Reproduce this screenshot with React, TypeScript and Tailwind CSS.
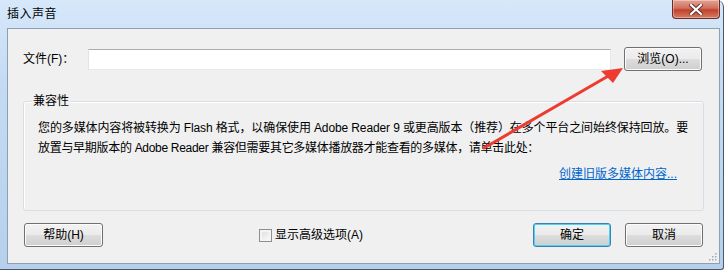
import { useState } from 'react';

const font = { fontFamily: '"Liberation Sans", "Noto Sans CJK SC", sans-serif' };

const Button = ({ label, focused, className = '' }: { label: string; focused?: boolean; className?: string }) => (
  <button
    className={`h-[24px] rounded-[3px] border text-[12px] text-black ${
      focused ? 'border-[#3c7fb1] shadow-[inset_0_0_0_1px_#48d3fb]' : 'border-[#707070] shadow-[inset_0_0_0_1px_#fcfcfc]'
    } bg-[linear-gradient(#f2f2f2_0%,#ebebeb_50%,#dddddd_51%,#cfcfcf_100%)] ${className}`}
  >
    {label}
  </button>
);

export default function App() {
  const [advanced, setAdvanced] = useState(false);

  return (
    <div className="w-[727px] h-[271px] bg-white relative overflow-hidden text-[12px] text-black" style={font}>
      {/* window frame */}
      <div className="w-[724px] h-[270px] rounded-tr-[7px] rounded-br-[3px] border-r border-b border-[#4b5868] bg-[linear-gradient(#d6e8fa,#c4dbf3_30%,#b6d0ec)] flex flex-col pl-[7px] pr-[3px] pb-[5px] relative">
        {/* title bar */}
        <div className="h-[28px] flex items-start">
          <span className="mt-[5px] text-[12px] text-black tracking-[0.5px]">插入声音</span>
          <div className="flex-1" />
          <div className="w-[48px] h-[19px] rounded-b-[4px] border border-t-0 border-[#6e2b22] bg-[linear-gradient(#e3a396,#d1705f_45%,#c2412c_55%,#d47c62)] flex items-center justify-center shadow-[inset_0_0_0_1px_rgba(255,255,255,0.35)]">
            <svg width="14" height="11" viewBox="0 0 14 11">
              <path d="M2 1 L12 10 M12 1 L2 10" stroke="#5a3028" strokeWidth="4" strokeLinecap="square" />
              <path d="M2 1 L12 10 M12 1 L2 10" stroke="#ffffff" strokeWidth="2.2" strokeLinecap="square" />
            </svg>
          </div>
        </div>

        {/* client area */}
        <div className="flex-1 border border-[#8f9fb2] bg-[#f0f0f0] px-[15px] flex flex-col">
          <div className="mt-[18px] h-[24px] flex items-center">
            <span className="w-[65px]">文件(F)：</span>
            <div className="w-[523px] h-[21px] bg-white border border-[#abadb3] border-l-[#e2e3ea] border-r-[#e3e9ef] border-b-[#e3e9ef]" />
            <Button label="浏览(O)..." className="ml-[13px] w-[78px]" />
          </div>

          <div className="mt-[30px] h-[110px] relative rounded-[3px] border border-[#d5dfe5] shadow-[inset_1px_1px_0_#ffffff] pl-[14px] pt-[16px] pr-[26px] flex flex-col">
            <span className="absolute left-[8px] top-[-10px] px-[1px] bg-[#f0f0f0] leading-[18px]">兼容性</span>
            <div className="leading-[20px] whitespace-nowrap tracking-[-0.12px]">
              您的多媒体内容将被转换为 Flash 格式，以确保使用 Adobe Reader 9 或更高版本（推荐）在多个平台之间始终保持回放。要
            </div>
            <div className="leading-[20px] whitespace-nowrap tracking-[-0.3px]">
              放置与早期版本的 Adobe Reader 兼容但需要其它多媒体播放器才能查看的多媒体，请单击此处：
            </div>
            <a className="mt-[6px] self-end leading-[20px] text-[#0066cc] underline">创建旧版多媒体内容...</a>
          </div>

          <div className="mt-[12px] h-[24px] flex items-center">
            <Button label="帮助(H)" className="ml-[1px] w-[79px]" />
            <label className="ml-[156px] flex items-center gap-[3px] cursor-default" onClick={() => setAdvanced(!advanced)}>
              <span className="w-[13px] h-[13px] border border-[#8e8f8f] bg-[linear-gradient(135deg,#dcdcdc,#fbfbfb)] shadow-[inset_0_0_0_2px_#f4f4f4] flex items-center justify-center">
                {advanced && <span className="text-[10px] leading-none">✓</span>}
              </span>
              <span>显示高级选项(A)</span>
            </label>
            <div className="flex-1" />
            <Button label="确定" focused className="w-[78px]" />
            <Button label="取消" className="ml-[14px] w-[78px] mr-[1px]" />
          </div>
        </div>

        {/* resize grip */}
        <svg className="absolute right-[6px] bottom-[8px]" width="8" height="8" viewBox="0 0 8 8">
          <rect x="6" y="0" width="1.5" height="1.5" fill="#a0a8b0" />
          <rect x="3" y="3" width="1.5" height="1.5" fill="#a0a8b0" />
          <rect x="6" y="3" width="1.5" height="1.5" fill="#a0a8b0" />
          <rect x="0" y="6" width="1.5" height="1.5" fill="#a0a8b0" />
          <rect x="3" y="6" width="1.5" height="1.5" fill="#a0a8b0" />
          <rect x="6" y="6" width="1.5" height="1.5" fill="#a0a8b0" />
        </svg>
      </div>

      {/* annotation arrow */}
      <svg className="absolute left-0 top-0 pointer-events-none" width="727" height="271">
        <line x1="484" y1="148" x2="610" y2="75" stroke="#ee3b30" strokeWidth="3" strokeLinecap="round" />
        <polygon points="623,68 601,71 613,83" fill="#ee3b30" />
      </svg>
    </div>
  );
}
